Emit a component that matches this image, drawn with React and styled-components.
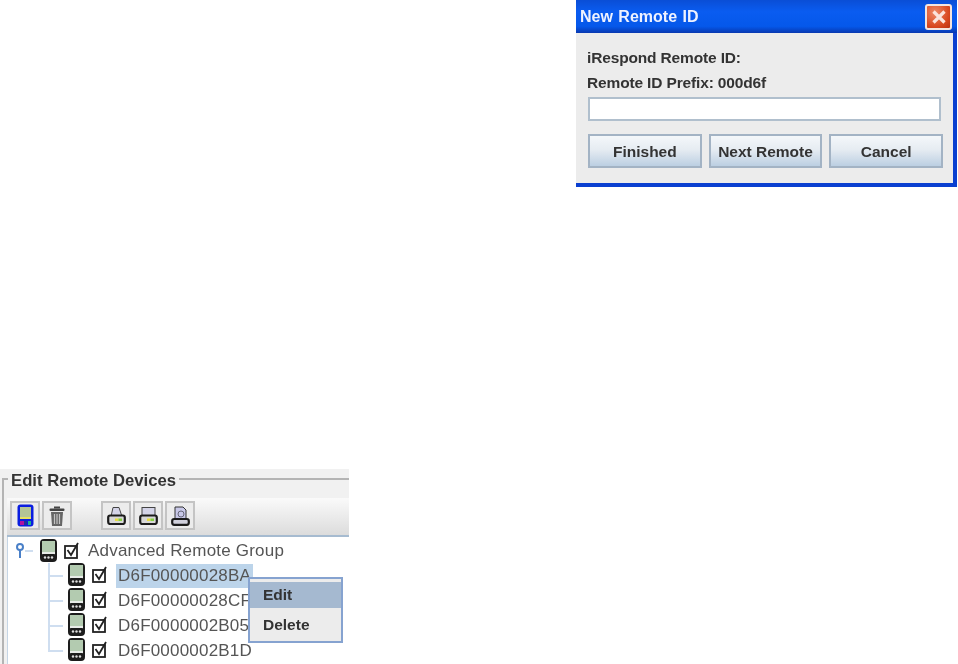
import React from "react";
import styled, { createGlobalStyle } from "styled-components";

const GlobalStyle = createGlobalStyle`
  html, body {
    margin: 0;
    padding: 0;
    background: #fff;
  }
`;

const Page = styled.div`
  width: 958px;
  height: 664px;
  display: flex;
  flex-direction: column;
  justify-content: space-between;
  font-family: "Liberation Sans", Arial, sans-serif;
  overflow: hidden;
`;

const DialogRow = styled.div`
  display: flex;
  justify-content: flex-end;
`;

const Dialog = styled.div`
  width: 381px;
  height: 187px;
  margin-right: 1px;
  box-sizing: border-box;
  background: #0a3fd0;
  padding: 0 4px 4px 0;
  display: flex;
  flex-direction: column;
`;

const TitleBar = styled.div`
  height: 33px;
  margin-right: -4px;
  box-sizing: border-box;
  padding: 0 5px 0 4px;
  display: flex;
  align-items: center;
  justify-content: space-between;
  background: linear-gradient(#0a4ed6, #0a5cf0 35%, #0558ea 80%, #0838b0);
  color: #eef2ff;
  font-weight: bold;
  font-size: 16px;
  word-spacing: 1px;
  filter: blur(0.6px);
`;

const CloseButton = styled.div`
  width: 27px;
  height: 26px;
  box-sizing: border-box;
  border-radius: 3px;
  border: 2px solid #f4e4de;
  background: radial-gradient(circle at 35% 30%, #ee8a68, #d8481f 65%, #b93010);
  display: flex;
  align-items: center;
  justify-content: center;
`;

const DialogBody = styled.div`
  flex: 1;
  background: #ececec;
  padding: 15px 12px 0 11px;
  display: flex;
  flex-direction: column;
  color: #333;
  font-size: 15.5px;
  font-weight: bold;
  filter: blur(0.6px);
`;

const DialogLabel = styled.div`
  height: ${(p) => p.$height}px;
  line-height: 20px;
  letter-spacing: -0.15px;
  white-space: nowrap;
`;

const RemoteField = styled.div`
  height: 24px;
  margin-left: 1px;
  box-sizing: border-box;
  background: #fff;
  border: 2px solid #b0bfcd;
`;

const ButtonRow = styled.div`
  display: flex;
  gap: 7px;
  margin: 13px -2px 0 1px;
`;

const DialogButton = styled.div`
  flex: 1;
  height: 34px;
  box-sizing: border-box;
  padding-top: 2px;
  border: 2px solid #a3b3c4;
  background: linear-gradient(#f4f7fa, #e6ecf2 45%, #bccfe2);
  display: flex;
  align-items: center;
  justify-content: center;
  white-space: nowrap;
`;

const EditPanel = styled.div`
  width: 349px;
  height: 195px;
  background: #f1f1f1;
  position: relative;
  box-sizing: border-box;
  padding: 9px 0 0 2px;
  filter: blur(0.6px);
`;

const Frame = styled.div`
  height: 186px;
  box-sizing: border-box;
  border: solid #b4b4b4;
  border-width: 2px 0 0 2px;
  padding: 18px 0 0 3px;
  position: relative;
`;

const Legend = styled.div`
  position: absolute;
  top: -7px;
  left: 4px;
  padding: 0 3px;
  background: #f1f1f1;
  font-size: 16.7px;
  line-height: 16px;
  font-weight: bold;
  color: #333;
`;

const Toolbar = styled.div`
  height: 39px;
  box-sizing: border-box;
  padding: 3px 0 0 3px;
  display: flex;
  gap: 2px;
  background: linear-gradient(#fafafa, #dcdcdc);
  border-bottom: 2px solid #a6bbd0;
`;

const ToolButton = styled.div`
  width: 30px;
  height: 29px;
  box-sizing: border-box;
  margin-right: ${(p) => p.$gap || 0}px;
  border: 2px solid #c4c4c4;
  background: #ececec;
  display: flex;
  align-items: center;
  justify-content: center;
`;

const Tree = styled.div`
  background: #fff;
  height: 127px;
  box-sizing: border-box;
  border-left: 1px solid #c5d5e5;
  padding-top: 1px;
  color: #555;
  font-size: 17px;
`;

const TreeRow = styled.div`
  height: 25px;
  display: flex;
  align-items: center;
  padding-left: ${(p) => p.$indent}px;

  svg {
    margin-bottom: ${(p) => p.$lift || 0}px;
  }
`;

const KeyStub = styled.div`
  width: 8px;
  height: 2px;
  background: #cfdef0;
  margin-right: 7px;
`;

const TreeLine = styled.div`
  align-self: stretch;
  width: 15px;
  margin-right: 5px;
  background:
    linear-gradient(#cfdef0, #cfdef0) 0 0 / 2px ${(p) => (p.$last ? "50%" : "100%")} no-repeat,
    linear-gradient(#cfdef0, #cfdef0) 0 50% / 100% 2px no-repeat;
`;

const RowCheck = styled.svg`
  margin-left: 7px;
  margin-right: ${(p) => p.$after}px;
  flex: none;
`;

const RowLabel = styled.span`
  padding: 2px;
  letter-spacing: 0.2px;
  white-space: nowrap;
  background: ${(p) => (p.$selected ? "#bcd4ea" : "transparent")};
`;

const ContextMenu = styled.div`
  position: absolute;
  left: 248px;
  top: 108px;
  width: 95px;
  height: 66px;
  box-sizing: border-box;
  border: 2px solid #86a3d0;
  background: #ececec;
  padding-top: 3px;
  color: #333;
  font-size: 15.5px;
  font-weight: bold;
`;

const MenuItem = styled.div`
  height: ${(p) => (p.$active ? 26 : 33)}px;
  line-height: ${(p) => (p.$active ? 26 : 33)}px;
  padding-left: 13px;
  background: ${(p) => (p.$active ? "#a5b9d0" : "transparent")};
`;

const Device = () => (
  <svg width="17" height="23" viewBox="0 0 17 23">
    <rect x="1" y="1" width="15" height="21" rx="3" fill="#e8ece8" stroke="#1c1c1c" strokeWidth="2" />
    <rect x="2" y="2" width="13" height="11" fill="#b3cbb0" />
    <rect x="1" y="15" width="15" height="7" rx="2" fill="#1c1c1c" />
    <circle cx="5" cy="18.5" r="1.2" fill="#ddd" />
    <circle cx="8.5" cy="18.5" r="1.2" fill="#ddd" />
    <circle cx="12" cy="18.5" r="1.2" fill="#ddd" />
  </svg>
);

const Check = ({ after }) => (
  <RowCheck $after={after} width="16" height="17" viewBox="0 0 16 17">
    <rect x="1" y="4" width="12" height="12" fill="#fff" stroke="#222" strokeWidth="1.8" />
    <path d="M3.5 8l3.5 5 7-12" fill="none" stroke="#222" strokeWidth="1.8" />
  </RowCheck>
);

const ColorDevice = () => (
  <svg width="17" height="23" viewBox="0 0 17 23">
    <rect x="0.5" y="0.5" width="16" height="22" rx="3" fill="#0a1ee0" />
    <rect x="3" y="3" width="11" height="10" fill="#b4c496" />
    <rect x="3" y="13" width="11" height="2" fill="#e8e060" />
    <rect x="3" y="17" width="4" height="4" fill="#b010a0" />
    <rect x="7" y="17" width="3" height="4" fill="#2030a0" />
    <rect x="11" y="17" width="3" height="4" fill="#20b090" />
  </svg>
);

const Trash = () => (
  <svg width="16" height="20" viewBox="0 0 16 20">
    <rect x="0.5" y="2.5" width="15" height="2.5" rx="1" fill="#444" />
    <rect x="5" y="0.5" width="6" height="2" fill="#444" />
    <path d="M2 6h12l-1 14H3z" fill="#666" />
    <path d="M5.5 8v10M8 8v10M10.5 8v10" stroke="#c4c4c4" strokeWidth="1.2" />
  </svg>
);

const Printer = ({ wide }) => (
  <svg width="19" height="19" viewBox="0 0 19 19">
    {wide ? (
      <rect x="3" y="1.5" width="13" height="9" fill="#d4d4e8" stroke="#444" />
    ) : (
      <path d="M6 1.5h6l3 9H4z" fill="#d4d4e8" stroke="#444" />
    )}
    <rect x="1.2" y="9.5" width="16.6" height="8.5" rx="2" fill="#d8d8d8" stroke="#1c1c1c" strokeWidth="2.2" />
    <rect x="8" y="12.5" width="3.5" height="2.5" fill="#e8dc40" />
    <rect x="11.5" y="12.5" width="3.5" height="2.5" fill="#84d040" />
  </svg>
);

const Doc = () => (
  <svg width="19" height="20" viewBox="0 0 19 20">
    <path d="M4 1h8l3 3v11H4z" fill="#c8c8e8" stroke="#333" />
    <circle cx="10" cy="8" r="3" fill="none" stroke="#667" />
    <rect x="1.2" y="13" width="16.6" height="5.8" rx="2" fill="#d0d0dc" stroke="#1c1c1c" strokeWidth="2.2" />
  </svg>
);

const Key = () => (
  <svg width="10" height="16" viewBox="0 0 10 16">
    <circle cx="5" cy="4" r="3" fill="none" stroke="#4a80c8" strokeWidth="2" />
    <path d="M5 7v8" stroke="#4a80c8" strokeWidth="2" />
  </svg>
);

const remotes = ["D6F00000028BA", "D6F00000028CF", "D6F0000002B05", "D6F0000002B1D"];

const App = () => (
  <Page>
    <GlobalStyle />
    <DialogRow>
      <Dialog>
        <TitleBar>
          New Remote ID
          <CloseButton>
            <svg width="16" height="16" viewBox="0 0 16 16">
              <path d="M2.5 2.5l11 11M13.5 2.5l-11 11" stroke="#fbe4dc" strokeWidth="3.2" />
            </svg>
          </CloseButton>
        </TitleBar>
        <DialogBody>
          <DialogLabel $height={25}>iRespond Remote ID:</DialogLabel>
          <DialogLabel $height={24}>Remote ID Prefix: 000d6f</DialogLabel>
          <RemoteField />
          <ButtonRow>
            <DialogButton>Finished</DialogButton>
            <DialogButton>Next Remote</DialogButton>
            <DialogButton>Cancel</DialogButton>
          </ButtonRow>
        </DialogBody>
      </Dialog>
    </DialogRow>
    <EditPanel>
      <Frame>
        <Legend>Edit Remote Devices</Legend>
        <Toolbar>
          <ToolButton><ColorDevice /></ToolButton>
          <ToolButton $gap={27}><Trash /></ToolButton>
          <ToolButton><Printer /></ToolButton>
          <ToolButton><Printer wide /></ToolButton>
          <ToolButton><Doc /></ToolButton>
        </Toolbar>
        <Tree>
          <TreeRow $indent={7}>
            <Key />
            <KeyStub />
            <Device />
            <Check after={6} />
            <RowLabel>Advanced Remote Group</RowLabel>
          </TreeRow>
          {remotes.map((name, i) => (
            <TreeRow key={name} $indent={40} $lift={2}>
              <TreeLine $last={i === remotes.length - 1} />
              <Device />
              <Check after={8} />
              <RowLabel $selected={i === 0}>{name}</RowLabel>
            </TreeRow>
          ))}
        </Tree>
      </Frame>
      <ContextMenu>
        <MenuItem $active>Edit</MenuItem>
        <MenuItem>Delete</MenuItem>
      </ContextMenu>
    </EditPanel>
  </Page>
);

export default App;
